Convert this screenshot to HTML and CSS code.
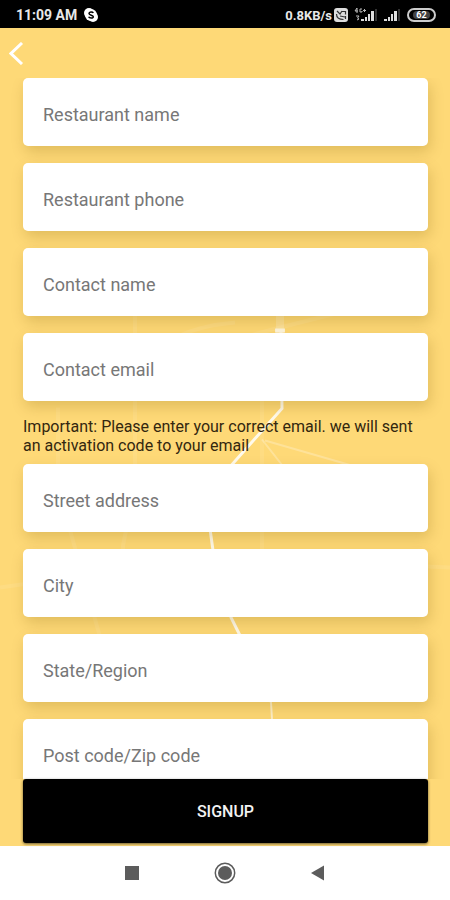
FILE: index.html
```
<!DOCTYPE html>
<html lang="en">
<head>
	<meta charset="utf-8">
	<meta name="viewport" content="width=device-width, initial-scale=1">
	<title>Restaurant signup</title>
	<link rel="stylesheet" href="styles.css">
</head>
<body>
	<div class="status">
		<span>11:09 AM</span>
		<svg class="app" width="14" height="14" viewBox="0 0 14 14">
			<circle cx="5" cy="5" r="5" fill="#fff"/>
			<circle cx="9" cy="9" r="5" fill="#fff"/>
			<circle cx="7" cy="7" r="6" fill="#fff"/>
			<path d="M9.300 5C8.600 3.600 5 3.600 5 5.500S9.300 7 9.300 8.800 5.200 10.500 4.700 8.800" fill="none" stroke="#000" stroke-width="1.500"/>
		</svg>
		<span class="speed">0.8KB/s</span>
		<svg class="volte" width="14" height="14" viewBox="0 0 14 14">
			<rect width="14" height="14" rx="3" fill="#ddd"/>
			<path d="M3 3l3 3 2-3M8 3.500h3.500v3M2.500 6c0 3.500 3 5.500 7 5.500M6 8l5 1M11.500 8v3" fill="none" stroke="#333" stroke-width="1.200"/>
		</svg>
		<svg class="signal" width="24" height="14" viewBox="0 0 24 14">
			<path d="M3 0L1 3h3M3 0v5M8 1H6v3h2V3M9 2.500h3M10.500 1v3M2 8h3l-1.500 2L5 11l-2 1" fill="none" stroke="#bbb"/>
			<path d="M7 11h3v2H7zM11 9h2v4h-2zM14 6h2v7h-2zM17 3h3v10h-3z" fill="#ddd"/>
			<path d="M21 1h2v12h-2z" fill="#333"/>
		</svg>
		<svg class="signal" width="17" height="14" viewBox="0 0 17 14">
			<path d="M0 11h3v2H0zM4 9h2v4H4zM7 6h2v7H7zM10 3h3v10h-3z" fill="#ddd"/>
			<path d="M14 1h2v12h-2z" fill="#333"/>
		</svg>
		<span class="battery"><span>62</span></span>
	</div>

	<main>
		<svg class="map" viewBox="0 0 450 819" preserveAspectRatio="xMidYMid slice" fill="none" stroke="#fff">
			<g stroke-width="4" opacity=".08">
				<path d="M135 288v170l-12 60v40M58 380v80l45 160M262 370v180"/>
				<path d="M130 340L280 300 400 270M175 310q25-12 60-15M0 560l210-30 240 10"/>
			</g>
			<path d="M265 413l90 26M262 412l22 28" stroke-width="2" opacity=".25"/>
			<path d="M280 288v18" stroke-width="8" opacity=".2"/>
			<path d="M275 303h10" stroke-width="4" opacity=".7"/>
			<path d="M281 305l1 76-50 56-24 50 5 36 18 67 9 18" stroke-width="3" opacity=".85"/>
			<path d="M240 608l31 67 1 17" stroke-width="2" opacity=".6"/>
		</svg>

		<header>
			<button class="back" type="button" aria-label="Back">
				<svg width="15" height="23" viewBox="0 0 15 23">
					<path d="M13 1L2 11.500 13 22" fill="none" stroke="#fff" stroke-width="3"/>
				</svg>
			</button>
		</header>

		<form id="signup" class="fields">
			<input type="text" aria-label="Restaurant name" placeholder="Restaurant name">
			<input type="tel" aria-label="Restaurant phone" placeholder="Restaurant phone">
			<input type="text" aria-label="Contact name" placeholder="Contact name">
			<input type="email" aria-label="Contact email" placeholder="Contact email">
			<p>Important: Please enter your correct email. we will sent an activation code to your email</p>
			<input type="text" aria-label="Street address" placeholder="Street address">
			<input type="text" aria-label="City" placeholder="City">
			<input type="text" aria-label="State/Region" placeholder="State/Region">
			<input type="text" aria-label="Post code/Zip code" placeholder="Post code/Zip code">
		</form>

		<div class="action">
			<button class="signup" type="submit" form="signup">SIGNUP</button>
		</div>
	</main>

	<nav>
		<button type="button" aria-label="Recent apps">
			<svg width="22" height="22" viewBox="0 0 22 22"><path d="M4 4h14v14H4z" fill="#5c5c5c"/></svg>
		</button>
		<button type="button" aria-label="Home">
			<svg width="22" height="22" viewBox="0 0 22 22">
				<circle cx="11" cy="11" r="9.700" fill="none" stroke="#5c5c5c" stroke-width="1.500"/>
				<circle cx="11" cy="11" r="7" fill="#5c5c5c"/>
			</svg>
		</button>
		<button type="button" aria-label="Back">
			<svg width="22" height="22" viewBox="0 0 22 22"><path d="M17 3.500v15L4 11z" fill="#5c5c5c"/></svg>
		</button>
	</nav>
</body>
</html>
```
FILE: styles.css
```
* {box-sizing: border-box;}

body {
	margin: 0;
	height: 100vh;
	display: flex;
	flex-direction: column;
	font-family: Roboto, sans-serif;
	background: #fff;
}

button {
	border: 0;
	padding: 0;
	background: none;
	font-family: inherit;
	cursor: pointer;
}

svg {display: block;}

/* Phone status bar */

.status {
	height: 28px;
	padding: 2px 14px 0 16px;
	display: flex;
	align-items: center;
	background: #000;
	color: #e8e8e8;
	font-size: 14px;
	font-weight: 700;
}

.app {margin-left: 7px;}

.speed {
	margin-left: auto;
	font-size: 13px;
}

.volte {margin: 0 6px 0 2px;}

.signal {margin-right: 6px;}

.battery {
	width: 29px;
	height: 14px;
	padding: 1px;
	border: 2px solid #ccc;
	border-radius: 7px;
}

.battery span {
	display: block;
	width: 17px;
	height: 8px;
	margin: 0 auto;
	border-radius: 4px;
	background: #444;
	color: #fff;
	font-size: 9px;
	line-height: 8px;
	text-align: center;
}

/* Signup screen */

main {
	flex: 1;
	min-height: 0;
	position: relative;
	isolation: isolate;
	display: flex;
	flex-direction: column;
	background: #fed977;
}

.map {
	position: absolute;
	inset: 0;
	z-index: -1;
	width: 100%;
	height: 100%;
}

header {
	height: 50px;
	flex: none;
	display: flex;
	align-items: center;
	padding-left: 9px;
}

.fields {
	flex: 1;
	min-height: 0;
	overflow-y: auto;
	scrollbar-width: none;
	padding: 0 22px 17px 23px;
	display: flex;
	flex-direction: column;
	gap: 17px;
}

.fields input {
	flex: none;
	width: 100%;
	height: 68px;
	padding: 4px 20px 0;
	border: 0;
	border-radius: 5px;
	background: #fff;
	box-shadow: 2px 6px 14px rgba(120, 85, 0, 0.22);
	color: #222;
	font-family: inherit;
	font-size: 18px;
}

.fields input::placeholder {color: #777;}

.fields p {
	margin: -1px 0 -8px;
	color: #33270f;
	font-size: 16px;
	line-height: 19px;
}

.action {
	flex: none;
	padding: 0 22px 3px 23px;
}

.signup {
	display: block;
	width: 100%;
	height: 64px;
	border-radius: 3px;
	background: #000;
	box-shadow: 0 1px 3px rgba(0, 0, 0, 0.6);
	color: #f2f2f2;
	font-size: 16px;
	font-weight: 500;
}

/* System buttons */

nav {
	height: 54px;
	flex: none;
	display: flex;
	align-items: center;
	justify-content: center;
	gap: 71px;
}
```
